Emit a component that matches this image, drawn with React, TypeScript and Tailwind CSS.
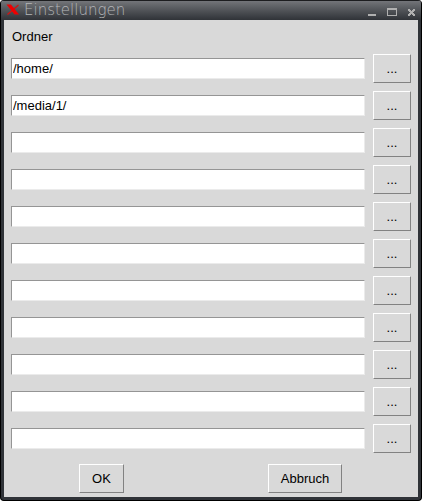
import React, { useState } from 'react';

const INITIAL_FOLDERS = ['/home/', '/media/1/', '', '', '', '', '', '', '', '', ''];

interface BevelButtonProps {
  label: string;
  ariaLabel?: string;
  className?: string;
}

const BevelButton: React.FC<BevelButtonProps> = ({ label, ariaLabel, className = '' }) => (
  <button
    type="button"
    aria-label={ariaLabel}
    className={`h-[29px] shrink-0 border border-t-white border-l-white border-r-[#828282] border-b-[#828282] bg-[#d9d9d9] text-center active:border-t-[#828282] active:border-l-[#828282] active:border-r-white active:border-b-white ${className}`}
  >
    {label}
  </button>
);

const TitleBar: React.FC = () => (
  <header className="flex h-5 items-center bg-linear-to-b from-[#77797d] to-[#303338] pr-1.5 pl-1 shadow-[inset_0_1px_0_#1c1d1f]">
    <svg width="14" height="12" viewBox="0 0 14 12" className="ml-px shrink-0" aria-hidden="true">
      <path d="M12.5 1 L1.5 10.5" stroke="#d81010" strokeWidth="1.2" />
      <path d="M0.5 0.5 H5 L13 10.5 H8.5 Z" fill="#f00000" />
    </svg>
    <h1 className="ml-1 flex-1 truncate font-['DejaVu_Sans_Light','DejaVu_Sans',sans-serif] text-[15px] leading-5 font-extralight text-[#b4b6b8]">
      Einstellungen
    </h1>
    <div className="flex items-center gap-[11px] pt-[3px] text-[#b0b0b0]">
      <button type="button" aria-label="Minimieren">
        <svg width="8" height="8" viewBox="0 0 8 8" className="block">
          <path d="M0 6h8v2H0z" fill="currentColor" />
        </svg>
      </button>
      <button type="button" aria-label="Maximieren">
        <svg width="10" height="8" viewBox="0 0 10 8" className="block">
          <path d="M0 0h10v8H0zM1 2v5h8V2z" fill="currentColor" fillRule="evenodd" />
        </svg>
      </button>
      <button type="button" aria-label="Schließen">
        <svg width="7" height="8" viewBox="0 0 7 8" className="block" shapeRendering="crispEdges">
          <path
            d="M0 1h2v1h1v1h1v-1h1v-1h2v2h-1v1h-1v1h1v1h1v2h-2v-1h-1v-1h-1v1h-1v1h-2v-2h1v-1h1v-1h-1v-1h-1z"
            fill="currentColor"
          />
        </svg>
      </button>
    </div>
  </header>
);

const App: React.FC = () => {
  const [folders, setFolders] = useState<string[]>(INITIAL_FOLDERS);

  const updateFolder = (index: number, value: string) => {
    setFolders(prev => prev.map((folder, i) => (i === index ? value : folder)));
  };

  return (
    <div className="min-h-screen bg-white font-['Liberation_Sans',Arial,sans-serif] text-[13px] leading-4 text-black">
      <div className="flex min-h-screen flex-col overflow-hidden rounded-[4px] border border-t-0 border-black bg-[#303338]">
        <TitleBar />

        {/* Client area inside the dark frame */}
        <main className="mx-[3px] mb-[3px] flex-1 bg-[#d9d9d9] pb-1">
          <h2 id="folders" className="px-2 pt-[9px] pb-[9px]">Ordner</h2>

          <div role="group" aria-labelledby="folders" className="flex flex-col gap-2 px-[7px]">
            {folders.map((folder, index) => (
              <div key={index} className="flex items-center gap-2">
                <input
                  type="text"
                  aria-label={`Ordner ${index + 1}`}
                  value={folder}
                  onChange={(e) => updateFolder(index, e.target.value)}
                  className="h-[21px] min-w-0 flex-1 border border-t-[#959595] border-l-[#959595] border-r-[#ebebeb] border-b-[#ebebeb] bg-white px-px outline-none"
                />
                <BevelButton label="..." ariaLabel={`Ordner ${index + 1} auswählen`} className="w-[38px]" />
              </div>
            ))}
          </div>

          <div className="mt-[11px] flex justify-between pr-[76px] pl-[75px]">
            <BevelButton label="OK" className="w-[45px]" />
            <BevelButton label="Abbruch" className="w-[74px]" />
          </div>
        </main>
      </div>
    </div>
  );
};

export default App;
